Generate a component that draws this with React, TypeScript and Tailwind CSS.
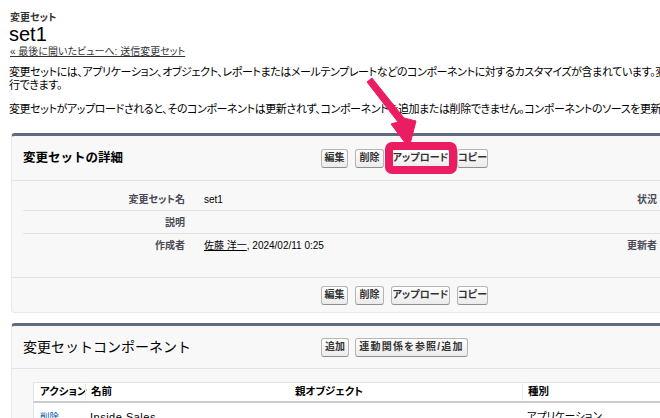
import React from "react";

const font = "font-['Liberation_Sans','Noto_Sans_CJK_JP',sans-serif]";
const palt = "[font-feature-settings:'palt']";

function Btn({ children, w }: { children: React.ReactNode; w: string }) {
  return (
    <button
      className={`h-[19px] px-0 flex items-center justify-center rounded-[3px] border border-[#b5b5b5] border-b-[#8f8f8f] bg-gradient-to-b from-[#ffffff] to-[#ebebeb] text-[10px] font-bold leading-none text-[#333] whitespace-nowrap ${palt} ${w}`}
    >
      {children}
    </button>
  );
}

function ButtonSet() {
  return (
    <div className="flex gap-[6px]">
      <Btn w="w-[27px]">編集</Btn>
      <Btn w="w-[29px] ml-[1px]">削除</Btn>
      <Btn w="w-[59px] ml-[1px]">アップロード</Btn>
      <Btn w="w-[31px] ml-[1px]">コピー</Btn>
    </div>
  );
}

function Row({ l1, v1, l2, last }: { l1: string; v1: React.ReactNode; l2?: string; last?: boolean }) {
  return (
    <div className={`flex items-center h-[23px] ${last ? "" : "border-b border-[#e3e3e3]"}`}>
      <div className={`w-[162px] text-right text-[10px] font-bold text-[#4a4a56] whitespace-nowrap ${palt}`}>{l1}</div>
      <div className="w-[330px] pl-[19px] text-[10px] text-[#000] whitespace-nowrap">{v1}</div>
      <div className={`w-[142px] text-right text-[10px] font-bold text-[#4a4a56] whitespace-nowrap ${palt}`}>{l2}</div>
    </div>
  );
}

export default function App() {
  return (
    <div className={`relative w-[660px] h-[418px] overflow-hidden bg-white ${font}`}>
      <div className="w-[960px] pl-[10px] pt-[12px]">
        <div className={`text-[10px] font-bold text-[#333] leading-[12px] ${palt}`}>変更セット</div>
        <div className="text-[20px] text-[#000] leading-[20px] -ml-[1px]">set1</div>
        <div className={`mt-[2px] text-[10px] text-[#333] leading-[12px] underline ${palt}`}>« 最後に開いたビューへ: 送信変更セット</div>
        <div className={`mt-[8px] text-[11px] tracking-[-0.4px] leading-[13px] text-[#000] -ml-[1px] ${palt}`}>
          <div className="whitespace-nowrap">変更セットには、アプリケーション、オブジェクト、レポートまたはメールテンプレートなどのコンポーネントに対するカスタマイズが含まれています。変更セットを使用して、このユーザの組織から別の組織にカスタマイズを移</div>
          <div className="whitespace-nowrap">行できます。</div>
        </div>
        <div className={`mt-[11px] text-[11px] tracking-[-0.4px] leading-[13px] text-[#000] whitespace-nowrap -ml-[1px] ${palt}`}>
          変更セットがアップロードされると、そのコンポーネントは更新されず、コンポーネントを追加または削除できません。コンポーネントのソースを更新した場合は、変更セットを複製し、その複製をアップロードしてください。
        </div>

        {/* Panel 1 */}
        <div className="mt-[17px] ml-[1px] bg-[#f8f8f8] border border-[#eaeaea] border-t-[3px] border-t-[#5f6b80] rounded-[4px]">
          <div className="flex items-center h-[45px] px-[11px] border-b border-[#e0e3e5]">
            <div className="w-[298px] text-[12.5px] font-bold text-[#000] whitespace-nowrap">変更セットの詳細</div>
            <ButtonSet />
          </div>
          <div className="px-[11px] pt-[7px] pb-[20px]">
            <Row l1="変更セット名" v1="set1" l2="状況" />
            <Row l1="説明" v1="" />
            <Row
              l1="作成者"
              l2="更新者"
              last
              v1={
                <span>
                  <span className="underline">佐藤 洋一</span>, 2024/02/11 0:25
                </span>
              }
            />
          </div>
          <div className="flex items-center h-[35px] px-[11px] border-t border-[#e0e3e5]">
            <div className="w-[298px]" />
            <ButtonSet />
          </div>
        </div>

        {/* Panel 2 */}
        <div className="mt-[10px] ml-[1px] bg-[#f8f8f8] border border-[#eaeaea] border-t-[3px] border-t-[#5f6b80] rounded-[4px]">
          <div className="flex items-center h-[43px] px-[11px] border-b border-[#e0e3e5]">
            <div className="w-[298px] text-[14px] text-[#000] whitespace-nowrap">変更セットコンポーネント</div>
            <div className="flex gap-[6px]">
              <Btn w="w-[28px]">追加</Btn>
              <Btn w="w-[113px] tracking-[1.2px]">連動関係を参照/追加</Btn>
            </div>
          </div>
          <div className="pl-[21px] pt-[13px]">
            <div className="bg-white border border-[#e0e3e5]">
              <div className={`flex items-center h-[20px] border-b-2 border-[#cccccc] text-[10.5px] font-bold text-[#000] ${palt}`}>
                <div className="w-[51px] pl-[6px] whitespace-nowrap">アクション</div>
                <div className="w-[207px] pl-[5px] border-l border-[#ededed] h-full flex items-center">名前</div>
                <div className="w-[230px] pl-[3px] h-full flex items-center whitespace-nowrap">親オブジェクト</div>
                <div className="w-[200px] pl-[5px] border-l border-[#ededed] h-full flex items-center">種別</div>
              </div>
              <div className={`flex items-center h-[28px] text-[10.5px] text-[#000] ${palt}`}>
                <div className="w-[51px] pl-[6px] text-[#015ba7] text-[9.5px]">削除</div>
                <div className="w-[207px] pl-[5px] text-[11px] tracking-[0.5px]">Inside Sales</div>
                <div className="w-[230px] pl-[3px]"></div>
                <div className="w-[200px] pl-[5px]">アプリケーション</div>
              </div>
            </div>
          </div>
        </div>
      </div>

      {/* Annotation overlay */}
      <svg className="absolute left-0 top-0 pointer-events-none" width="660" height="418" viewBox="0 0 660 418">
        <rect x="389" y="146" width="64" height="24" rx="3" fill="none" stroke="#ec1c63" strokeWidth="8" />
        <polygon
          points="367,82 372,78 404,118 416,121 409,148 391,124 398,122"
          fill="#ec1c63"
          stroke="#ec1c63"
          strokeWidth="1"
          strokeLinejoin="round"
        />
      </svg>
    </div>
  );
}
